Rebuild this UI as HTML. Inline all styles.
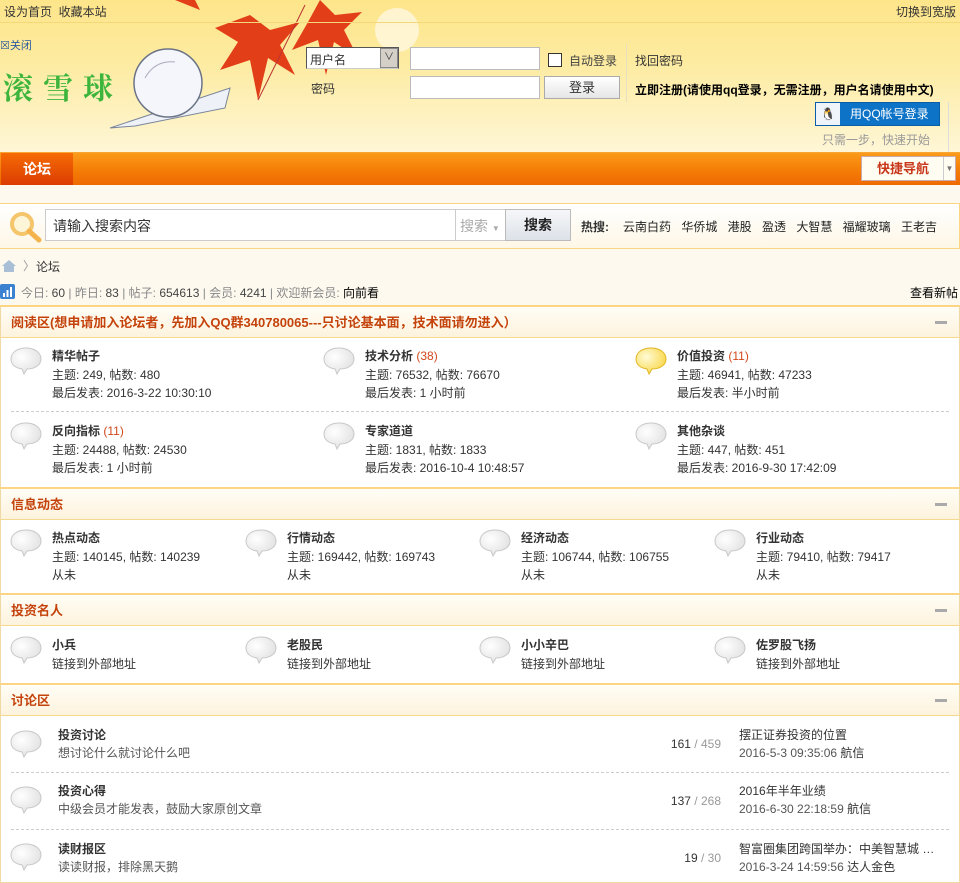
<!DOCTYPE html>
<html><head><meta charset="utf-8"><style>
*{margin:0;padding:0;box-sizing:border-box}
body{width:960px;height:873px;overflow:hidden;background:#fdf9ef;font:12px "Liberation Sans","Noto Sans CJK SC",sans-serif;color:#333;position:relative}
.a{position:absolute;white-space:nowrap}
#hd{position:absolute;left:0;top:0;width:960px;height:152px;background:linear-gradient(180deg,#fde58a 0%,#fdeba0 40%,#fef6d6 100%)}
#nav{position:absolute;left:0;top:152px;width:960px;height:33px;background:linear-gradient(#fb9a1a,#f47a05 60%,#ee6a02);border-top:1px solid #f9a533}
.sec{position:absolute;left:0;width:960px;background:#fff;border:1px solid #f0d9a4;border-top:2px solid #fcd584}
.sh{height:31px;background:linear-gradient(#fffdf6,#fdf3dd);border-bottom:1px solid #f5d98f;color:#c4420b;font-weight:bold;font-size:13px;line-height:31px;padding-left:10px;position:relative}
.sh:after{content:"";position:absolute;right:12px;top:14px;width:12px;height:3px;background:#aaa}
.bub{position:absolute;width:32px;height:28px}
.t{font-weight:bold;color:#333}
.c{color:#d2481b;font-weight:normal}
.g{color:#444}
.dash{position:absolute;border-top:1px dashed #ccc}
</style></head><body>
<div id="hd">
<svg class="a" style="left:130px;top:0" width="300" height="110"><circle cx="267" cy="30" r="22" fill="#fff8e0" opacity=".8"/><g fill="#e23f18"><path d="M120 15 L140 30 L170 22 L150 45 L165 75 L138 58 L128 100 L120 60 L90 70 L108 42 L85 28 Z"/><path d="M190 0 L205 15 L232 12 L214 30 L228 58 L204 42 L196 75 L188 40 L162 50 L178 22 Z"/><path d="M45 0 L70 10 L65 0 Z"/></g><path d="M128 100 L175 5" stroke="#b33" stroke-width="1" fill="none"/></svg>
<svg class="a" style="left:105px;top:38px" width="130" height="95"><path d="M5 90 L125 50 L120 70 L30 88 Z" fill="#eef2f8" stroke="#7a8599"/><circle cx="63" cy="45" r="34" fill="#f4f6fb" stroke="#6b7487" stroke-width="1.5"/><path d="M40 40 Q50 22 70 24" stroke="#aab" fill="none"/></svg>
</div>
<div class="a" style="left:0;top:22px;width:960px;border-top:1px solid #f3d97a"></div>
<div class="a" style="left:4px;top:3px;color:#333">设为首页&nbsp;&nbsp;收藏本站</div>
<div class="a" style="right:4px;top:3px;color:#333">切换到宽版</div>
<div class="a" style="left:0;top:37px;color:#2b5a9c;font-size:11px">☒关闭</div>
<div class="a" style="left:3px;top:64px;color:#3db53c;font-size:30px;font-weight:bold;letter-spacing:10px;font-family:'Noto Serif CJK SC',serif">滚雪球</div>
<div class="a" style="left:306px;top:47px;width:93px;height:22px;background:#fff;border:1px solid #555;border-bottom-color:#ccc;font-size:12px;line-height:24px;padding-left:3px">用户名<span style="position:absolute;right:0;top:0;width:18px;height:20px;background:#d4d0c8;border:1px solid #888;text-align:center;line-height:18px;font-size:10px">∨</span></div>
<div class="a" style="left:311px;top:80px">密码</div>
<div class="a" style="left:410px;top:47px;width:130px;height:23px;background:#fff;border:1px solid #bbb"></div>
<div class="a" style="left:410px;top:76px;width:130px;height:23px;background:#fff;border:1px solid #bbb"></div>
<div class="a" style="left:548px;top:53px;width:14px;height:14px;background:#fff;border:1px solid #333"></div>
<div class="a" style="left:569px;top:52px;color:#444">自动登录</div>
<div class="a" style="left:544px;top:76px;width:76px;height:23px;background:linear-gradient(#fff,#e6e6e6);border:1px solid #aaa;text-align:center;line-height:21px;font-size:13px">登录</div>
<div class="a" style="left:626px;top:44px;height:58px;border-left:1px solid #e8e0c0"></div>
<div class="a" style="left:635px;top:52px;color:#333">找回密码</div>
<div class="a" style="left:635px;top:81px;font-weight:bold;color:#000">立即注册(请使用qq登录，无需注册，用户名请使用中文)</div>
<div class="a" style="left:815px;top:102px;width:125px;height:24px;background:#0d73c7;border:1px solid #0a5ea8;color:#fff;line-height:22px;font-size:12px;padding-left:34px">用QQ帐号登录<span style="position:absolute;left:0;top:0;width:24px;height:22px;background:#eef4fa;text-align:center">🐧</span></div>
<div class="a" style="left:822px;top:131px;color:#999">只需一步，快速开始</div>
<div class="a" style="left:948px;top:102px;height:50px;border-left:1px solid #ddd"></div>
<div id="nav"></div>
<div class="a" style="left:1px;top:153px;width:72px;height:32px;background:linear-gradient(#f56b04,#dc3c02);color:#fff;font-weight:bold;font-size:14px;text-align:center;line-height:32px">论坛</div>
<div class="a" style="left:861px;top:156px;width:95px;height:25px;background:#fffdf2;border:1px solid #caa;color:#c8361a;font-weight:bold;font-size:13px;line-height:23px;padding-left:15px">快捷导航<span style="position:absolute;right:0;top:0;width:12px;height:23px;border-left:1px solid #ccc;color:#777;font-size:8px;text-align:center">▼</span></div>
<div class="a" style="left:0;top:203px;width:960px;height:46px;background:linear-gradient(#fff,#fdf7e6);border:1px solid #fcd584;border-left:none"></div>
<svg class="a" style="left:8px;top:210px" width="34" height="34"><circle cx="14" cy="14" r="10" fill="#fdf5d8" stroke="#f4c56b" stroke-width="4"/><path d="M21 21 L31 30" stroke="#f4b34c" stroke-width="5" stroke-linecap="round"/></svg>
<div class="a" style="left:45px;top:209px;width:411px;height:32px;background:#fff;border:1px solid #ccc;border-right:none;font-size:14px;line-height:32px;padding-left:7px;color:#333">请输入搜索内容</div>
<div class="a" style="left:455px;top:209px;width:50px;height:32px;background:#fff;border:1px solid #ccc;border-right:none;line-height:32px;padding-left:4px;color:#aaa;font-size:14px">搜索 <span style="font-size:8px">▼</span></div>
<div class="a" style="left:505px;top:209px;width:66px;height:32px;background:linear-gradient(#f6f7f9,#dde2e8);border:1px solid #bbb;text-align:center;line-height:30px;font-weight:bold;font-size:14px;color:#222">搜索</div>
<div class="a" style="left:581px;top:218px;font-weight:bold;color:#333">热搜:</div>
<div class="a" style="left:623px;top:218px;color:#222;word-spacing:7px">云南白药 华侨城 港股 盈透 大智慧 福耀玻璃 王老吉</div>
<svg class="a" style="left:1px;top:259px" width="16" height="14"><path d="M1 7 L8 1 L15 7 L13 7 L13 13 L3 13 L3 7 Z" fill="#a9bfd6"/></svg>
<div class="a" style="left:23px;top:257px;color:#999">〉</div>
<div class="a" style="left:36px;top:258px;color:#333">论坛</div>
<svg class="a" style="left:0;top:284px" width="15" height="15"><rect width="15" height="15" rx="2" fill="#3b82d0"/><rect x="3" y="9" width="2" height="4" fill="#fff"/><rect x="6.5" y="6" width="2" height="7" fill="#fff"/><rect x="10" y="3" width="2" height="10" fill="#fff"/></svg>
<div class="a" style="left:21px;top:284px;color:#888">今日: <span class="g">60</span> | 昨日: <span class="g">83</span> | 帖子: <span class="g">654613</span> | 会员: <span class="g">4241</span> | 欢迎新会员: <span style="color:#000">向前看</span></div>
<div class="a" style="right:2px;top:284px;color:#000">查看新帖</div>

<svg width="0" height="0" style="position:absolute"><defs><radialGradient id="bg" cx=".35" cy=".35" r=".8"><stop offset="0" stop-color="#fff"/><stop offset="1" stop-color="#ddd"/></radialGradient><radialGradient id="by" cx=".35" cy=".35" r=".8"><stop offset="0" stop-color="#fffbd6"/><stop offset="1" stop-color="#f8d236"/></radialGradient><symbol id="b" viewBox="0 0 32 28"><path d="M16 1 C8 1 1 5 1 12 C1 18 6 21 12 22 L14 27 L17 22 C25 22 31 18 31 12 C31 5 24 1 16 1Z"/></symbol></defs></svg>

<div class="sec" style="top:305px;height:183px"><div class="sh">阅读区(想申请加入论坛者，先加入QQ群340780065---只讨论基本面，技术面请勿进入）</div></div>
<div class="sec" style="top:487px;height:107px"><div class="sh">信息动态</div></div>
<div class="sec" style="top:593px;height:91px"><div class="sh">投资名人</div></div>
<div class="sec" style="top:683px;height:200px"><div class="sh">讨论区</div></div>

<svg class="bub" style="left:10px;top:347px"><use href="#b" fill="url(#bg)" stroke="#c8c8c8"/></svg>
<div class="a" style="left:52px;top:347px;line-height:18.5px"><span class="t">精华帖子</span><br>主题: 249, 帖数: 480<br>最后发表: 2016-3-22 10:30:10</div>
<svg class="bub" style="left:323px;top:347px"><use href="#b" fill="url(#bg)" stroke="#c8c8c8"/></svg>
<div class="a" style="left:365px;top:347px;line-height:18.5px"><span class="t">技术分析</span> <span class="c">(38)</span><br>主题: 76532, 帖数: 76670<br>最后发表: 1 小时前</div>
<svg class="bub" style="left:635px;top:347px"><use href="#b" fill="url(#by)" stroke="#e2b520"/></svg>
<div class="a" style="left:677px;top:347px;line-height:18.5px"><span class="t">价值投资</span> <span class="c">(11)</span><br>主题: 46941, 帖数: 47233<br>最后发表: 半小时前</div>
<div class="dash" style="left:11px;top:411px;width:938px"></div>
<svg class="bub" style="left:10px;top:422px"><use href="#b" fill="url(#bg)" stroke="#c8c8c8"/></svg>
<div class="a" style="left:52px;top:422px;line-height:18.5px"><span class="t">反向指标</span> <span class="c">(11)</span><br>主题: 24488, 帖数: 24530<br>最后发表: 1 小时前</div>
<svg class="bub" style="left:323px;top:422px"><use href="#b" fill="url(#bg)" stroke="#c8c8c8"/></svg>
<div class="a" style="left:365px;top:422px;line-height:18.5px"><span class="t">专家道道</span><br>主题: 1831, 帖数: 1833<br>最后发表: 2016-10-4 10:48:57</div>
<svg class="bub" style="left:635px;top:422px"><use href="#b" fill="url(#bg)" stroke="#c8c8c8"/></svg>
<div class="a" style="left:677px;top:422px;line-height:18.5px"><span class="t">其他杂谈</span><br>主题: 447, 帖数: 451<br>最后发表: 2016-9-30 17:42:09</div>

<svg class="bub" style="left:10px;top:529px"><use href="#b" fill="url(#bg)" stroke="#c8c8c8"/></svg>
<div class="a" style="left:52px;top:529px;line-height:18.5px"><span class="t">热点动态</span><br>主题: 140145, 帖数: 140239<br>从未</div>
<svg class="bub" style="left:245px;top:529px"><use href="#b" fill="url(#bg)" stroke="#c8c8c8"/></svg>
<div class="a" style="left:287px;top:529px;line-height:18.5px"><span class="t">行情动态</span><br>主题: 169442, 帖数: 169743<br>从未</div>
<svg class="bub" style="left:479px;top:529px"><use href="#b" fill="url(#bg)" stroke="#c8c8c8"/></svg>
<div class="a" style="left:521px;top:529px;line-height:18.5px"><span class="t">经济动态</span><br>主题: 106744, 帖数: 106755<br>从未</div>
<svg class="bub" style="left:714px;top:529px"><use href="#b" fill="url(#bg)" stroke="#c8c8c8"/></svg>
<div class="a" style="left:756px;top:529px;line-height:18.5px"><span class="t">行业动态</span><br>主题: 79410, 帖数: 79417<br>从未</div>

<svg class="bub" style="left:10px;top:636px"><use href="#b" fill="url(#bg)" stroke="#c8c8c8"/></svg>
<div class="a" style="left:52px;top:636px;line-height:18.5px"><span class="t">小兵</span><br>链接到外部地址</div>
<svg class="bub" style="left:245px;top:636px"><use href="#b" fill="url(#bg)" stroke="#c8c8c8"/></svg>
<div class="a" style="left:287px;top:636px;line-height:18.5px"><span class="t">老股民</span><br>链接到外部地址</div>
<svg class="bub" style="left:479px;top:636px"><use href="#b" fill="url(#bg)" stroke="#c8c8c8"/></svg>
<div class="a" style="left:521px;top:636px;line-height:18.5px"><span class="t">小小辛巴</span><br>链接到外部地址</div>
<svg class="bub" style="left:714px;top:636px"><use href="#b" fill="url(#bg)" stroke="#c8c8c8"/></svg>
<div class="a" style="left:756px;top:636px;line-height:18.5px"><span class="t">佐罗股飞扬</span><br>链接到外部地址</div>

<svg class="bub" style="left:10px;top:730px"><use href="#b" fill="url(#bg)" stroke="#c8c8c8"/></svg>
<div class="a" style="left:58px;top:726px;line-height:18px"><span class="t">投资讨论</span><br><span style="color:#555">想讨论什么就讨论什么吧</span></div>
<div class="a" style="right:239px;top:737px"><span style="color:#333">161</span> <span style="color:#999">/ 459</span></div>
<div class="a" style="left:739px;top:726px;line-height:18px;color:#333">摆正证券投资的位置<br><span style="color:#555">2016-5-3 09:35:06</span> 航信</div>
<div class="dash" style="left:11px;top:772px;width:938px"></div>
<svg class="bub" style="left:10px;top:786px"><use href="#b" fill="url(#bg)" stroke="#c8c8c8"/></svg>
<div class="a" style="left:58px;top:782px;line-height:18px"><span class="t">投资心得</span><br><span style="color:#555">中级会员才能发表，鼓励大家原创文章</span></div>
<div class="a" style="right:239px;top:794px"><span style="color:#333">137</span> <span style="color:#999">/ 268</span></div>
<div class="a" style="left:739px;top:782px;line-height:18px;color:#333">2016年半年业绩<br><span style="color:#555">2016-6-30 22:18:59</span> 航信</div>
<div class="dash" style="left:11px;top:829px;width:938px"></div>
<svg class="bub" style="left:10px;top:843px"><use href="#b" fill="url(#bg)" stroke="#c8c8c8"/></svg>
<div class="a" style="left:58px;top:840px;line-height:18px"><span class="t">读财报区</span><br><span style="color:#555">读读财报，排除黑天鹅</span></div>
<div class="a" style="right:239px;top:851px"><span style="color:#333">19</span> <span style="color:#999">/ 30</span></div>
<div class="a" style="left:739px;top:840px;line-height:18px;color:#333">智富圈集团跨国举办：中美智慧城 …<br><span style="color:#555">2016-3-24 14:59:56</span> 达人金色</div>
</body></html>
